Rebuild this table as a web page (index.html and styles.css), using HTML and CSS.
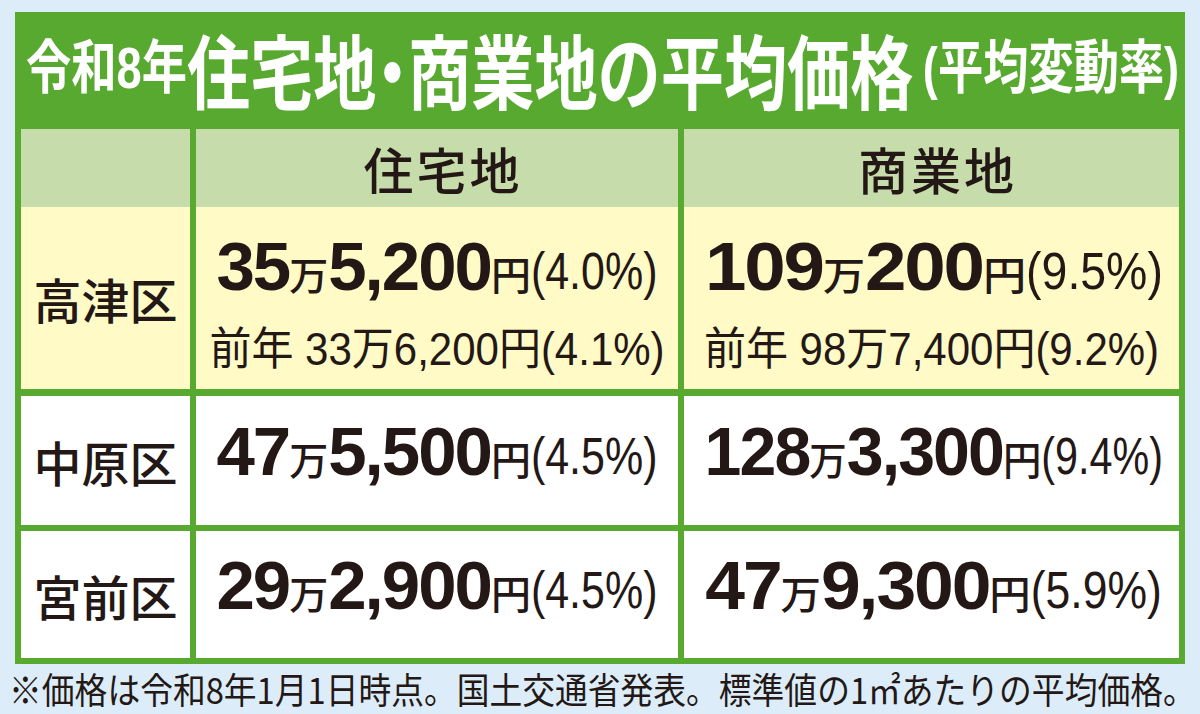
FILE: index.html
```html
<!DOCTYPE html>
<html lang="ja">
<head>
<meta charset="utf-8">
<title>令和8年 住宅地・商業地の平均価格</title>
<link rel="stylesheet" href="styles.css">
</head>
<body>
<div class="board">
  <div class="title">
    <div class="title-inner">
      <span class="t-small">令和8年</span>
      <span class="t-large">住宅地<span class="dot">・</span>商業地の平均価格</span>
      <span class="t-small t-sub">(平均変動率)</span>
    </div>
  </div>
  <div class="table">
    <div class="row head">
      <div class="cell"></div>
      <div class="cell"><span class="head-text">住宅地</span></div>
      <div class="cell"><span class="head-text">商業地</span></div>
    </div>
    <div class="row r1">
      <div class="cell label"><span>高津区</span></div>
      <div class="cell value">
        <div class="line main"><span class="num">35</span><span class="man">万</span><span class="num">5,200</span><span class="yen">円</span><span class="pct">(4.0%)</span></div>
        <div class="line prev">前年 33万6,200円(4.1%)</div>
      </div>
      <div class="cell value c3">
        <div class="line main fit-wide"><span class="num">109</span><span class="man">万</span><span class="num">200</span><span class="yen">円</span><span class="pct">(9.5%)</span></div>
        <div class="line prev">前年 98万7,400円(9.2%)</div>
      </div>
    </div>
    <div class="row r2">
      <div class="cell label"><span>中原区</span></div>
      <div class="cell value">
        <div class="line main"><span class="num">47</span><span class="man">万</span><span class="num">5,500</span><span class="yen">円</span><span class="pct">(4.5%)</span></div>
      </div>
      <div class="cell value c3">
        <div class="line main fit-narrow"><span class="num">128</span><span class="man">万</span><span class="num">3,300</span><span class="yen">円</span><span class="pct">(9.4%)</span></div>
      </div>
    </div>
    <div class="row r3">
      <div class="cell label"><span>宮前区</span></div>
      <div class="cell value">
        <div class="line main"><span class="num">29</span><span class="man">万</span><span class="num">2,900</span><span class="yen">円</span><span class="pct">(4.5%)</span></div>
      </div>
      <div class="cell value c3">
        <div class="line main fit-mid"><span class="num">47</span><span class="man">万</span><span class="num">9,300</span><span class="yen">円</span><span class="pct">(5.9%)</span></div>
      </div>
    </div>
  </div>
</div>
<p class="note">※価格は令和8年1月1日時点。国土交通省発表。標準値の1㎡あたりの平均価格。</p>
</body>
</html>
```

FILE: styles.css
```css
* {
  box-sizing: border-box;
  margin: 0;
  padding: 0;
}

html,
body {
  background: #dcedf9;
}

body {
  width: 1200px;
  height: 714px;
  overflow: hidden;
  font-family: "Liberation Sans", "Noto Sans CJK JP", sans-serif;
  color: #231815;
}

.board {
  width: 1170px;
  margin: 12px 0 0 15px;
  background: #58a92f;
  padding: 0 6px 6px;
}

.title {
  height: 117px;
  display: flex;
  align-items: center;
  padding-left: 5px;
  padding-bottom: 6px;
}

.title-inner {
  display: flex;
  align-items: center;
  flex-shrink: 0;
  white-space: nowrap;
  color: #fff;
  font-weight: 700;
  line-height: 1;
  transform: scaleX(0.78);
  transform-origin: left center;
}

.t-small {
  font-size: 58px;
}

.t-sub {
  margin-left: 12px;
}

.t-large {
  font-family: "Noto Sans CJK JP", sans-serif;
  font-size: 81px;
}

.dot {
  font-feature-settings: "palt";
}

.row {
  display: grid;
  grid-template-columns: 169px 482px 495px;
  column-gap: 6px;
}

.row + .row {
  margin-top: 6px;
}

.row.head + .row {
  margin-top: 0;
}

.row.r1 + .row {
  margin-top: 7px;
}

.head {
  height: 78px;
}

.head .cell {
  background: #c6dcab;
}

.r1 {
  height: 182px;
}

.r1 .cell {
  background: #fffac6;
}

.r1 .value {
  justify-content: flex-start;
  padding-top: 23px;
}

.r2 {
  height: 129px;
}

.r3 {
  height: 127px;
}

.r2 .cell,
.r3 .cell {
  background: #fff;
}

.cell {
  display: flex;
  flex-direction: column;
  justify-content: center;
  align-items: center;
}

.head-text {
  font-family: "Noto Sans CJK JP", sans-serif;
  font-weight: 500;
  font-size: 50px;
  letter-spacing: 3px;
  padding-left: 12px;
  line-height: 1;
}

.label {
  font-family: "Noto Sans CJK JP", sans-serif;
  font-weight: 500;
  font-size: 48px;
  line-height: 1;
}

.line {
  white-space: nowrap;
}

.main {
  line-height: 74px;
}

.c3 .main {
  margin-left: 4px;
}

.fit-wide {
  transform: scaleX(1.08);
}

.fit-narrow {
  transform: scaleX(0.96);
}

.fit-mid {
  transform: scaleX(1.035);
}

.num {
  font-weight: 700;
  font-size: 69px;
  letter-spacing: -2px;
}

.man {
  font-family: "Noto Sans CJK JP", sans-serif;
  font-weight: 500;
  font-size: 39px;
}

.yen {
  font-family: "Noto Sans CJK JP", sans-serif;
  font-weight: 500;
  font-size: 40px;
}

.pct {
  display: inline-block;
  font-size: 43px;
  transform: scaleY(1.2);
  transform-origin: 50% 75%;
}

.prev {
  font-size: 42px;
  line-height: 56px;
  transform: scaleY(1.08);
}

.note {
  margin-top: 2px;
  padding-left: 10px;
  font-family: "Noto Sans CJK JP", sans-serif;
  font-size: 36px;
  line-height: 44px;
  white-space: nowrap;
  transform: scaleX(0.91);
  transform-origin: left center;
}
```
